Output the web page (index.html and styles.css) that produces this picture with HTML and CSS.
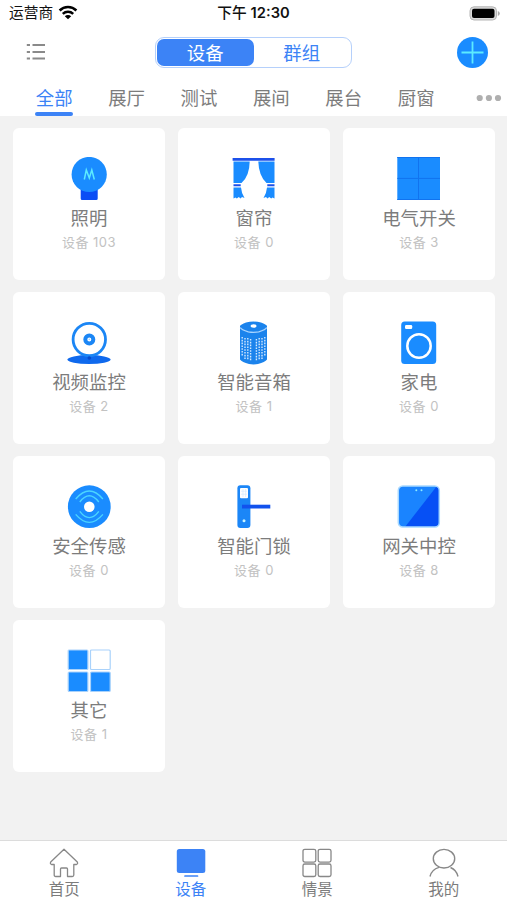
FILE: index.html
```
<!DOCTYPE html>
<html lang="zh-CN">
<head>
<meta charset="utf-8">
<meta name="viewport" content="width=device-width, initial-scale=1">
<title>设备</title>
<link rel="stylesheet" href="styles.css">
</head>
<body>
<div class="app">
  <div class="status">
    <div class="carrier"><span>运营商</span>
      <svg width="20" height="15" viewBox="0 0 20 15"><g fill="none" stroke="#000" stroke-width="2.5"><path d="M1.6 5.5a12 12 0 0 1 16.8 0"/><path d="M4.8 8.8a7.5 7.5 0 0 1 10.400 0"/></g><path d="M6.800 11.200a4.600 4.600 0 0 1 6.400 0L10 14.300z"/></svg>
    </div>
    <div class="time">下午 <b>12:30</b></div>
    <svg class="battery" width="32" height="15" viewBox="0 0 32 15"><rect x="1" y=".8" width="26.500" height="13.200" rx="4" fill="#dadada" stroke="#b5b5b5"/><rect x="3" y="2.700" width="22.500" height="9.400" rx="2"/><path d="M28.800 5v5q2-.8 2-2.500T28.800 5z" fill="#aaa"/></svg>
  </div>
  <header class="nav">
    <svg class="list" width="20" height="18" viewBox="0 0 20 18"><path d="M.8 2h3.200M6.500 2H19M.8 9h3.200M6.500 9H19M.8 15.500h3.200M6.500 15.500H19" stroke="#8a8a8a" stroke-width="1.800"/></svg>
    <div class="segment"><span class="seg on">设备</span><span class="seg">群组</span></div>
    <svg class="add" width="31" height="31" viewBox="0 0 31 31"><circle cx="15.500" cy="15.500" r="15.500" fill="#1a8cff"/><path d="M4.500 15.500h22M15.500 4.500v22" stroke="#5cebff" stroke-width="1.800"/></svg>
  </header>
  <nav class="tabs">
    <span class="tab on">全部</span><span class="tab">展厅</span><span class="tab">测试</span><span class="tab">展间</span><span class="tab">展台</span><span class="tab">厨窗</span>
    <svg class="more" width="26" height="8" viewBox="0 0 26 8"><g fill="#afafaf"><circle cx="3.700" cy="4" r="3.100"/><circle cx="12.900" cy="4" r="3.100"/><circle cx="22" cy="4" r="3.100"/></g></svg>
  </nav>
  <main class="grid">
    <section class="card">
      <svg class="icon" viewBox="0 0 44 44"><path d="M13.700 32h17v9.500q0 1.500-1.500 1.500h-14q-1.500 0-1.500-1.500z" fill="#0b4df5"/><circle cx="22.200" cy="17.500" r="17.600" fill="#1a8cff"/><path d="M17.300 22.500l2-9.500 3 8 2.500-8 2.500 9.500" fill="none" stroke="#5cebff" stroke-width="1.500"/></svg>
      <h2>照明</h2><p>设备 103</p>
    </section>
    <section class="card">
      <svg class="icon" viewBox="0 0 44 44"><path d="M1.500 4.500h16.200Q17.500 19 9.500 26H1.500zM42.500 4.500H26.300Q26.800 19 34.500 26h8zM1.500 30.500h7.500q.5 6 3.500 10.500l-2.500-1-1.500 1.500-1.700-1.500-2 1.500-1.300-1-2 1zM42.500 30.500H35q-.5 6-3.500 10.500l2.500-1 1.500 1.500 1.700-1.500 2 1.500 1.300-1 2 1z" fill="#1a8cff"/><path d="M.6.900h42v2.900H.6zM1.500 27.200h7.200v2H1.500zM35.300 27.200h7.200v2h-7.200z" fill="#1c50ea"/></svg>
      <h2>窗帘</h2><p>设备 0</p>
    </section>
    <section class="card">
      <svg class="icon" viewBox="0 0 44 44"><path d="M.3 0H43v43H.3z" fill="#1a8cff"/><path d="M.3.500H43M.3 42.500H43M.3 21.400H43M21.500 0v43" stroke="#1173ef"/></svg>
      <h2>电气开关</h2><p>设备 3</p>
    </section>
    <section class="card">
      <svg class="icon" viewBox="0 0 44 44"><ellipse cx="22" cy="38.600" rx="21.500" ry="4.500" fill="#0f69ed"/><circle cx="22.300" cy="18.500" r="16.200" fill="#fff" stroke="#1b86f5" stroke-width="2.800"/><circle cx="22.300" cy="18.400" r="4" fill="#fff" stroke="#1b86f5" stroke-width="4"/><circle cx="22.300" cy="18.400" r=".8" fill="#a9d4ff"/><circle cx="22.300" cy="37" r="1.800" fill="#064acc"/></svg>
      <h2>视频监控</h2><p>设备 2</p>
    </section>
    <section class="card">
      <svg class="icon" viewBox="0 0 44 44"><path d="M8 5Q8.500 3.500 14 1.500q7.500-1.800 15 0Q34.500 3.500 35 5V38.500Q33 41 26 43q-4.500.8-9 0Q10 41 8 38.500z" fill="#1b83ec"/><path d="M8.300 6.500q1 2.200 8 4.300 5.200 1 10.400 0 7-2.100 8-4.300" fill="none" stroke="#a9d4ff" stroke-width="1.300"/><ellipse cx="21.600" cy="5" rx="3" ry="1.700" fill="#fff"/><g fill="none" stroke="#d3e9ff" stroke-width="1.400" stroke-dasharray="1.600 1.200"><path d="M10.200 16v19M13 17v21M15.800 17v22M18.600 18v22M24.400 18v22M27.200 17v22M30 17v21M32.800 16v19"/></g></svg>
      <h2>智能音箱</h2><p>设备 1</p>
    </section>
    <section class="card">
      <svg class="icon" viewBox="0 0 44 44"><rect x="4.200" y=".5" width="35" height="42.500" rx="3.500" fill="#1a8cff"/><rect x="8" y="4" width="7.200" height="4" rx="1.200" fill="#fff"/><circle cx="22" cy="25" r="11.700" fill="none" stroke="#fff" stroke-width="2.500"/></svg>
      <h2>家电</h2><p>设备 0</p>
    </section>
    <section class="card">
      <svg class="icon" viewBox="0 0 44 44"><circle cx="22.300" cy="21.700" r="21.400" fill="#1a8cff"/><circle cx="22.300" cy="21.700" r="5.300" fill="#fff"/><g fill="none" stroke="#4bd5ff" stroke-width="1.400"><path d="M8.700 14q13.600-16 27.200 0M12.800 17q9.500-12.500 19 0M8.700 29.400q13.600 16 27.200 0M12.800 26.400q9.500 12.500 19 0"/></g></svg>
      <h2>安全传感</h2><p>设备 0</p>
    </section>
    <section class="card">
      <svg class="icon" viewBox="0 0 44 44"><rect x="5.400" y=".3" width="13" height="42.800" rx="3" fill="#1b86f7"/><rect x="8" y="3" width="8" height="10.200" rx="1" fill="#fff"/><path d="M9 6.200h6M9 9.200h6M11 4v8M13.600 4v8" stroke="#cfe7ff" stroke-width=".6"/><path d="M10 19.700h28.300v3.800H10z" fill="#1252ed"/><circle cx="12" cy="35.800" r="1.500" fill="#c8f4ff"/></svg>
      <h2>智能门锁</h2><p>设备 0</p>
    </section>
    <section class="card">
      <svg class="icon" viewBox="0 0 44 44"><rect x="1.300" y="1" width="41" height="41" rx="4.500" fill="#1a84ff"/><path d="M39.500 1.500q2.800 1.200 2.800 4v32q0 4.500-4.500 4.500H8z" fill="#0650f5"/><rect x="1.300" y="1" width="41" height="41" rx="4.500" fill="none" stroke="#a9d9ff" stroke-width="1.500"/><circle cx="19.300" cy="5.200" r="1" fill="#8deaff"/><circle cx="24.500" cy="5.200" r="1" fill="#8deaff"/></svg>
      <h2>网关中控</h2><p>设备 8</p>
    </section>
    <section class="card">
      <svg class="icon" viewBox="0 0 44 44"><g fill="#1a8cff" stroke="#a9d2fb" stroke-width="1.200"><rect x="1.200" y="1" width="19.700" height="19.500" rx="1"/><rect x="23.500" y="1" width="19.700" height="19.500" rx="1" fill="#fff"/><rect x="1.200" y="23" width="19.700" height="19.500" rx="1"/><rect x="23.500" y="23" width="19.700" height="19.500" rx="1"/></g></svg>
      <h2>其它</h2><p>设备 1</p>
    </section>
  </main>
  <footer class="bottom">
    <div class="item"><svg width="30" height="30" viewBox="0 0 30 30"><path d="M15 1.200L28.300 14q1 2-1 2.500h-2.500V27q0 1.500-1.500 1.500h-4.800V21q0-1-1-1h-5q-1 0-1 1v7.500H6.700q-1.500 0-1.500-1.500V16.500H2.700q-2-.5-1-2.500z" fill="none" stroke="#888" stroke-width="1.300" stroke-linejoin="round"/></svg><span>首页</span></div>
    <div class="item on"><svg width="30" height="30" viewBox="0 0 30 30"><rect x=".8" y="1" width="28.500" height="24" rx="2.500" fill="#3c83f6"/><path d="M9 28h12.500" stroke="#3c83f6" stroke-width="1.700" stroke-linecap="round"/></svg><span>设备</span></div>
    <div class="item"><svg width="30" height="30" viewBox="0 0 30 30"><g fill="none" stroke="#888" stroke-width="1.300"><rect x="1" y="1.300" width="12.800" height="12.800" rx="1.800"/><rect x="16.200" y="1.300" width="12.800" height="12.800" rx="1.800"/><rect x="1" y="16" width="12.800" height="12.500" rx="1.800"/><rect x="16.200" y="16" width="12.800" height="12.500" rx="1.800"/></g></svg><span>情景</span></div>
    <div class="item"><svg width="30" height="30" viewBox="0 0 30 30"><g fill="none" stroke="#888" stroke-width="1.400"><ellipse cx="15" cy="10.700" rx="10.700" ry="9.300"/><path d="M1 28.500Q2.500 21.500 10 19.300M29 28.500q-1.500-6.500-7.500-9"/></g></svg><span>我的</span></div>
  </footer>
</div>
</body>
</html>
```
FILE: styles.css
```
* { box-sizing: border-box; }
body {
  margin: 0;
  font-family: Inter, "Noto Sans CJK SC", sans-serif;
  color: #7c7c7c;
  background: #f2f2f2;
}
svg { display: block; flex: none; }
.app { display: flex; flex-direction: column; height: 900px; }

.status {
  display: grid;
  grid-template-columns: 1fr auto 1fr;
  align-items: center;
  height: 27px;
  padding: 0 6px 0 9px;
  background: #fff;
  color: #111;
  font-size: 14.7px;
  line-height: 27px;
}
.carrier { display: flex; align-items: center; gap: 5px; }
.carrier svg { margin-top: -2px; }
.time { font-weight: 500; margin-left: -3px; }
.time b { font-weight: 600; }
.battery { justify-self: end; }

.nav {
  display: flex;
  align-items: center;
  justify-content: space-between;
  height: 50px;
  padding: 0 19px 0 26px;
  background: #fff;
}
.segment {
  display: flex;
  width: 197px;
  height: 31px;
  margin-left: 4px;
  padding: 1px;
  border: 1px solid #b5d0fb;
  border-radius: 9px;
}
.seg {
  flex: 1;
  display: flex;
  align-items: center;
  justify-content: center;
  border-radius: 7px;
  font-size: 18.4px;
  color: #3c83f6;
}
.seg.on { background: #3c83f6; color: #fff; }

.tabs {
  display: flex;
  height: 39px;
  padding-left: 18px;
  background: #fff;
  font-size: 18.4px;
  line-height: 42px;
}
.tab { flex: none; width: 72.4px; display: flex; flex-direction: column; align-items: center; }
.tab.on { color: #3c83f6; }
.tab.on::after {
  content: "";
  width: 38px;
  height: 4px;
  margin-top: -7px;
  border-radius: 2px;
  background: #3c83f6;
}
.more { margin: 17px 0 0 23.6px; }

.grid {
  flex: 1;
  display: grid;
  grid-template-columns: repeat(3, 152px);
  grid-auto-rows: 152px;
  gap: 12px 13px;
  padding: 12px 0 0 13px;
}
.card {
  display: flex;
  flex-direction: column;
  align-items: center;
  padding-top: 29px;
  border-radius: 6px;
  background: #fff;
}
.icon { width: 44px; height: 44px; }
.card h2 {
  margin: 4px 0 0;
  font-size: 18.4px;
  font-weight: 400;
  line-height: 26px;
}
.card p {
  margin: 1px 0 0;
  font-size: 13px;
  line-height: 20px;
  letter-spacing: .5px;
  color: #c2c2c2;
}

.bottom {
  display: flex;
  height: 60px;
  padding-left: 1px;
  border-top: 1px solid #dcdcdc;
  background: #fff;
  font-size: 15.5px;
}
.item {
  flex: 1;
  display: flex;
  flex-direction: column;
  align-items: center;
  padding-top: 7px;
  line-height: 24px;
}
.item.on { color: #3c83f6; }
```
